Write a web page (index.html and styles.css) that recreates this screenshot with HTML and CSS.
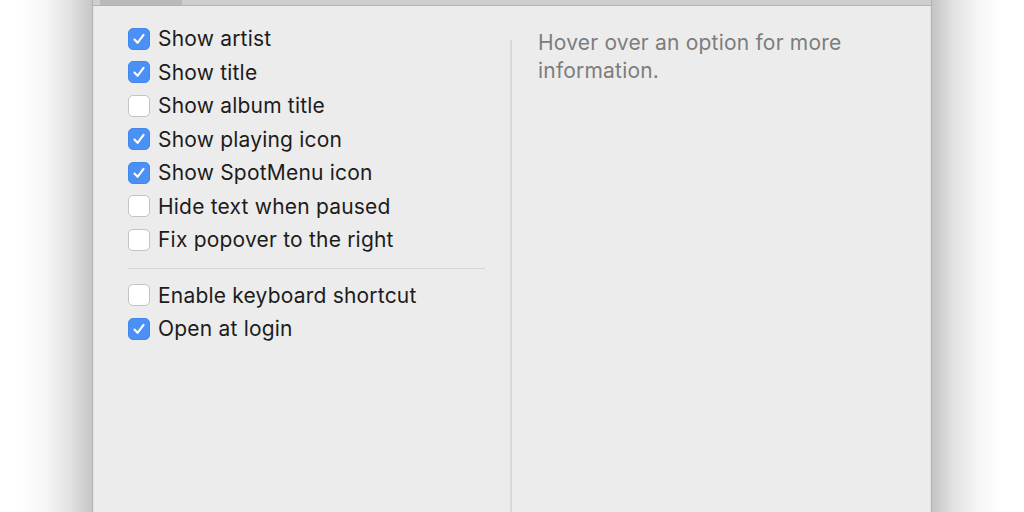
FILE: index.html
```html
<!DOCTYPE html>
<html>
<head>
<meta charset="utf-8">
<link rel="stylesheet" href="styles.css">
</head>
<body>
<div class="stage">
  <div class="shade shade-left"></div>
  <div class="window">
    <div class="toolbar"><div class="tab"></div></div>
    <div class="content">
      <div class="options">
        <label class="row"><span class="box checked"><svg viewBox="0 0 22 22"><path d="M6 11.6 L9.4 15.2 L16 6.4"/></svg></span>Show artist</label>
        <label class="row"><span class="box checked"><svg viewBox="0 0 22 22"><path d="M6 11.6 L9.4 15.2 L16 6.4"/></svg></span>Show title</label>
        <label class="row"><span class="box"></span>Show album title</label>
        <label class="row"><span class="box checked"><svg viewBox="0 0 22 22"><path d="M6 11.6 L9.4 15.2 L16 6.4"/></svg></span>Show playing icon</label>
        <label class="row"><span class="box checked"><svg viewBox="0 0 22 22"><path d="M6 11.6 L9.4 15.2 L16 6.4"/></svg></span>Show SpotMenu icon</label>
        <label class="row"><span class="box"></span>Hide text when paused</label>
        <label class="row"><span class="box"></span>Fix popover to the right</label>
        <div class="sep"></div>
        <label class="row"><span class="box"></span>Enable keyboard shortcut</label>
        <label class="row"><span class="box checked"><svg viewBox="0 0 22 22"><path d="M6 11.6 L9.4 15.2 L16 6.4"/></svg></span>Open at login</label>
      </div>
      <div class="divider"></div>
      <p class="info">Hover over an option for more information.</p>
    </div>
  </div>
  <div class="shade shade-right"></div>
</div>
</body>
</html>
```

FILE: styles.css
```css
html, body {
  margin: 0;
  padding: 0;
  background: #ffffff;
}

.stage {
  display: grid;
  grid-template-columns: 92px 840px 1fr;
  height: 512px;
  overflow: hidden;
}

.shade-left {
  background: linear-gradient(to right, #ffffff 0px, #ffffff 20px, #f6f6f6 45px, #e2e2e2 70px, #c6c6c6 92px);
}

.shade-right {
  background: linear-gradient(to left, #ffffff 0px, #ffffff 22px, #f6f6f6 45px, #e2e2e2 70px, #c4c4c4 92px);
}

.window {
  background: #ececec;
  border-left: 1px solid #b4b4b4;
  border-right: 1px solid #b4b4b4;
  box-shadow: inset 1px 0 0 #e2e2e2, inset -1px 0 0 #e2e2e2;
  display: flex;
  flex-direction: column;
  font-family: Inter, "Noto Sans", sans-serif;
}

.toolbar {
  height: 5px;
  background: #cfcdcf;
  border-bottom: 1px solid #b3b3b3;
  padding-left: 7px;
  display: flex;
}

.tab {
  width: 82px;
  background: #bab8ba;
}

.content {
  flex: 1;
  display: flex;
  padding-left: 35px;
}

.options {
  width: 357px;
  padding-top: 16px;
  display: flex;
  flex-direction: column;
}

.row {
  height: 33.5px;
  display: flex;
  align-items: center;
  font-size: 21px;
  color: #1c1c1c;
  letter-spacing: 0.2px;
}

.box {
  width: 22px;
  height: 22px;
  box-sizing: border-box;
  border-radius: 5px;
  border: 1px solid #c3c3c3;
  background: #ffffff;
  margin-right: 8px;
  flex: none;
  display: flex;
  align-items: center;
  justify-content: center;
}

.box.checked {
  background: #4b90f4;
  border-color: #4287ee;
}

.box svg {
  width: 22px;
  height: 22px;
}

.box svg path {
  fill: none;
  stroke: #ffffff;
  stroke-width: 2.3;
  stroke-linecap: round;
  stroke-linejoin: round;
}

.sep {
  height: 1px;
  background: #d4d4d4;
  margin: 11px 0 10px 0;
}

.divider {
  width: 2px;
  background: #d8d8d8;
  margin-top: 34px;
  margin-left: 25px;
}

.info {
  margin: 23px 30px 0 26px;
  font-size: 21px;
  line-height: 28px;
  color: #7d7d7d;
  letter-spacing: 0.2px;
  width: 362px;
}
```
